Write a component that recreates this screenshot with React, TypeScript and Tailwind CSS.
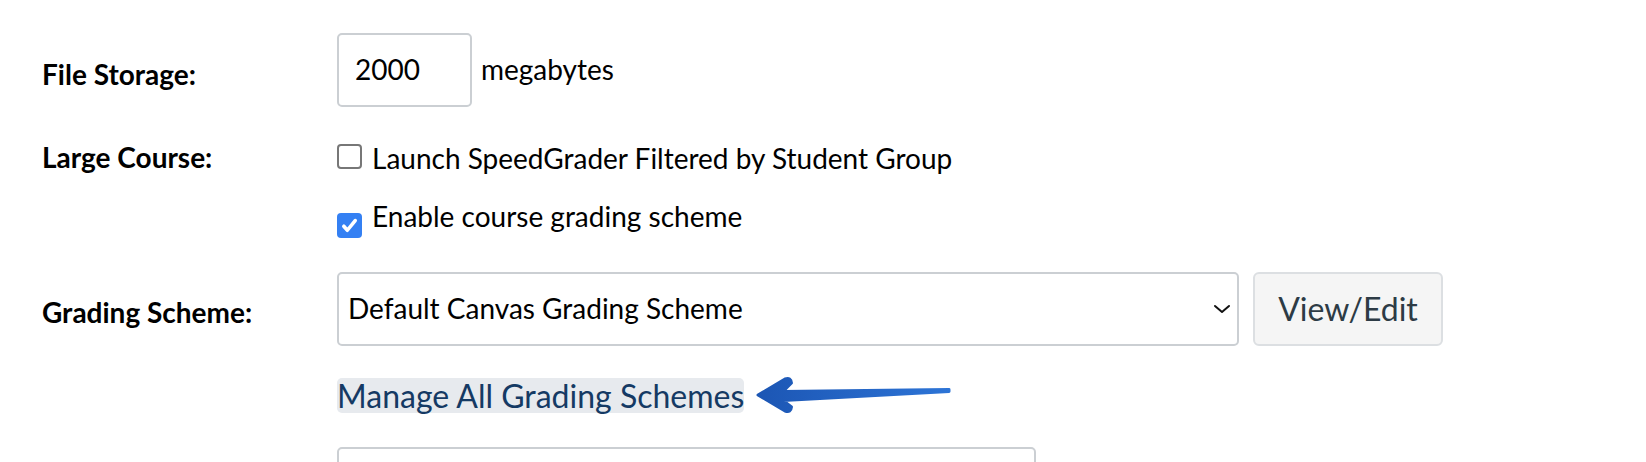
import React from 'react';

function Checkbox({ checked }: { checked?: boolean }) {
  if (checked) {
    return (
      <span className="flex h-[25px] w-[25px] shrink-0 items-center justify-center rounded-[4px] bg-[#3480f3]">
        <svg width="19" height="19" viewBox="0 0 16 16" fill="none">
          <path d="M3.2 8.6l3 3.4L12.8 3.8" stroke="white" strokeWidth="3" strokeLinecap="round" strokeLinejoin="round" />
        </svg>
      </span>
    );
  }
  return <span className="block h-[25px] w-[25px] shrink-0 rounded-[4px] border-2 border-[#777] bg-white" />;
}

function Arrow() {
  return (
    <svg width="200" height="42" viewBox="0 0 200 42" className="ml-[9px] mt-[-4px] shrink-0">
      <defs>
        <linearGradient id="arrowFill" x1="0" y1="0" x2="1" y2="0">
          <stop offset="0" stopColor="#1c56b4" />
          <stop offset="1" stopColor="#2d74d6" />
        </linearGradient>
      </defs>
      <path
        d="M5 21 L32 5 Q38 3 38.5 9 L30 17.5 L196 15.5 L196 17.5 L30 26.5 L38.5 33 Q38 39 32 37 Z"
        fill="url(#arrowFill)"
        stroke="url(#arrowFill)"
        strokeWidth="3"
        strokeLinejoin="round"
      />
    </svg>
  );
}

export default function App() {
  return (
    <div className="h-[462px] w-[1646px] overflow-hidden bg-white pl-[42px] font-['Lato',sans-serif] text-black">
      {/* File storage */}
      <div className="mt-[33px] flex h-[74px] items-start">
        <div className="mt-[25px] w-[295px] text-[28px] font-bold leading-[1.2]">File Storage:</div>
        <div className="flex items-center gap-[9px]">
          <div className="flex h-[74px] w-[135px] items-center rounded-[5px] border-2 border-[#cbcfd3] pl-[16px] text-[28px] leading-[1.2]">
            2000
          </div>
          <span className="text-[28px] leading-[1.2]">megabytes</span>
        </div>
      </div>

      {/* Large course */}
      <div className="mt-[34px] flex items-start">
        <div className="w-[295px] text-[28px] font-bold leading-[1.2]">Large Course:</div>
        <div>
          <div className="flex items-start gap-[10px]">
            <div className="mt-[3px]">
              <Checkbox />
            </div>
            <span className="text-[28px] leading-[34px]">Launch SpeedGrader Filtered by Student Group</span>
          </div>
          <div className="mt-[24px] flex items-start gap-[10px]">
            <div className="mt-[14px]">
              <Checkbox checked />
            </div>
            <span className="text-[28px] leading-[34px]">Enable course grading scheme</span>
          </div>
        </div>
      </div>

      {/* Grading scheme */}
      <div className="mt-[34px] flex items-start">
        <div className="mt-[24px] w-[295px] text-[28px] font-bold leading-[1.2]">Grading Scheme:</div>
        <div>
          <div className="flex items-start gap-[14px]">
            <div className="flex h-[74px] w-[902px] items-center justify-between rounded-[5px] border-2 border-[#cbcfd3] pl-[9px] pr-[6px] text-[28px] leading-[1.2]">
              <span>Default Canvas Grading Scheme</span>
              <svg width="18" height="10" viewBox="0 0 18 10" fill="none">
                <path d="M2 2l7 6 7-6" stroke="#111" strokeWidth="2" strokeLinecap="round" strokeLinejoin="round" />
              </svg>
            </div>
            <button className="flex h-[74px] w-[190px] items-center justify-center rounded-[6px] border-2 border-[#dcdfe2] bg-[#f5f5f5] text-[32px] leading-[1.2] text-[#2d3b45]">
              View/Edit
            </button>
          </div>

          <div className="mt-[32px] flex h-[35px] items-start">
            <a className="inline-block h-[35px] rounded-[5px] bg-[#e7eaee] text-[32px] leading-[35px] text-[#153a64]">
              Manage All Grading Schemes
            </a>
            <Arrow />
          </div>

          <div className="mt-[34px] h-[74px] w-[699px] rounded-[5px] border-2 border-[#cbcfd3]" />
        </div>
      </div>
    </div>
  );
}
